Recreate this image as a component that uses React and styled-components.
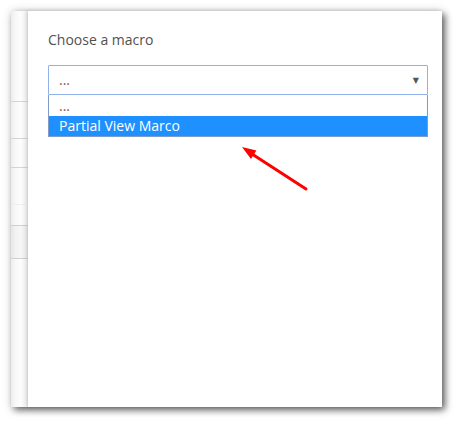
import React from 'react';
import styled, { createGlobalStyle } from 'styled-components';

const GlobalStyle = createGlobalStyle`
  body {
    margin: 0;
    background: #ffffff;
    font-family: "Open Sans", "Liberation Sans", sans-serif;
  }
`;

const stripRows = [
  { height: 90, line: '#d4d4d4' },
  { height: 36, line: '#d4d4d4' },
  { height: 28, line: '#d4d4d4' },
  { height: 36, line: '#eeeeee' },
  { height: 20, line: '#d0d0d0' },
  { height: 32, line: '#d0d0d0', shade: true },
];

const options = [
  { label: '...', selected: false },
  { label: 'Partial View Marco', selected: true },
];

const App = () => {
  return (
    <>
      <GlobalStyle />
      <Stage>
        <Window>
          <BackStrip>
            {stripRows.map((row, i) => (
              <StripRow key={i} $height={row.height} $line={row.line} $shade={row.shade} />
            ))}
          </BackStrip>
          <Panel>
            <Title>Choose a macro</Title>
            <SelectBox>
              <SelectValue>...</SelectValue>
              <Caret>▼</Caret>
            </SelectBox>
            <OptionList>
              {options.map((opt) => (
                <Option key={opt.label} $selected={opt.selected}>
                  {opt.label}
                </Option>
              ))}
            </OptionList>
            <Pointer width="80" height="56" viewBox="0 0 80 56">
              <line x1="68" y1="46" x2="14" y2="11" stroke="#f00" strokeWidth="3" strokeLinecap="round" />
              <polygon points="4,4 18.4,7.5 13,15.9" fill="#f00" />
            </Pointer>
          </Panel>
        </Window>
      </Stage>
    </>
  );
};

const Stage = styled.div`
  width: 461px;
  height: 426px;
  padding: 11px;
  box-sizing: border-box;
`;

const Window = styled.div`
  display: flex;
  width: 431px;
  height: 396px;
  background: #ffffff;
  box-shadow: 3px 3px 7px rgba(0, 0, 0, 0.6), 0 0 10px rgba(0, 0, 0, 0.12);
`;

const BackStrip = styled.div`
  display: flex;
  flex-direction: column;
  width: 17px;
  background: linear-gradient(to right, #ececec 0px, #f7f7f7 4px, #fdfdfd 9px, #f4f4f4 15px, #e2e2e2 17px);
`;

const StripRow = styled.div`
  height: ${(p) => p.$height}px;
  border-bottom: 1px solid ${(p) => p.$line};
  background: ${(p) => (p.$shade ? 'rgba(0, 0, 0, 0.025)' : 'transparent')};
`;

const Panel = styled.div`
  position: relative;
  flex: 1;
  padding: 19px 14px 0 20px;
  background: #ffffff;
  box-shadow: -2px 0 4px rgba(0, 0, 0, 0.1);
`;

const Title = styled.div`
  font-size: 14px;
  line-height: 20px;
  color: #515151;
  margin-bottom: 15px;
`;

const SelectBox = styled.div`
  display: flex;
  align-items: center;
  justify-content: space-between;
  height: 30px;
  box-sizing: border-box;
  padding: 0 8px 0 10px;
  border: 1px solid #8fb2ec;
  border-radius: 1px;
`;

const SelectValue = styled.span`
  font-size: 14px;
  color: #7b5a4e;
  line-height: 20px;
`;

const Caret = styled.span`
  font-size: 8px;
  color: #555555;
  font-family: "DejaVu Sans", sans-serif;
`;

const OptionList = styled.div`
  border: 1px solid #7f9cc9;
  border-top: none;
  padding-top: 1px;
`;

const Option = styled.div`
  height: 20px;
  line-height: 20px;
  padding-left: 10px;
  font-size: 14px;
  color: ${(p) => (p.$selected ? '#ffffff' : '#7b5a4e')};
  background: ${(p) => (p.$selected ? '#1e90ff' : 'transparent')};
`;

const Pointer = styled.svg`
  position: absolute;
  left: 210px;
  top: 132px;
`;

export default App;
